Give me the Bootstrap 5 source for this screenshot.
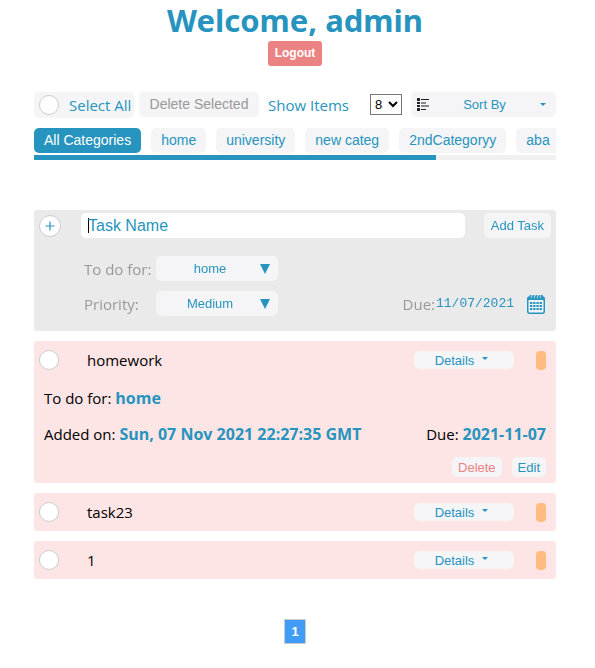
<!DOCTYPE html>
<html lang="en">
<head>
<meta charset="utf-8">
<meta name="viewport" content="width=device-width, initial-scale=1">
<title>Tasks</title>
<link href="https://cdn.jsdelivr.net/npm/bootstrap@5.3.0/dist/css/bootstrap.min.css" rel="stylesheet">
<style>
  :root { --brand: #2694be; --soft: #f5f4f6; --danger-soft: #eb8383; }
  body { font-family: "Open Sans", "Noto Sans", sans-serif; font-size: 15px; line-height: 20px; color: #000; }
  .page { padding: 0 39px 0 34px; }
  .brand { color: var(--brand); }
  h1 { font-family: "Noto Sans", sans-serif; font-size: 31px; line-height: 41px; font-weight: 700; color: var(--brand); }
  .ctl { font-family: "Liberation Sans", Arial, sans-serif; font-size: 13px; line-height: 15px; border: 0; border-radius: 5px; background: var(--soft); color: var(--brand); padding: 5px 7px; height: 25px; white-space: nowrap; }
  .ctl-lg { font-size: 14px; padding: 5px 10px; }
  .ctl:disabled { color: #999; }
  .logout { background: var(--danger-soft); color: #fff; font-size: 12px; font-weight: 700; border-radius: 3px; }
  .ring { appearance: none; width: 20px; height: 20px; margin: 0; border: 1px solid #ccc; border-radius: 50%; background: #fff; flex: none; }
  .ring:checked { background: var(--brand); }
  .toolbar { margin-top: 25px; height: 27px; }
  .select-all { background: var(--soft); border-radius: 5px; height: 26px; width: 100px; padding: 0 0 0 5px; gap: 10px; white-space: nowrap; }
  .del-sel { width: 120px; margin-left: 5px; }
  .items-label { margin-left: 9px; }
  .items { appearance: auto; width: 32px; height: 21px; border: 1px solid #767676; padding: 0; margin-right: 9px; background: #fff; color: #000; font: 13px "Liberation Sans", Arial, sans-serif; }
  .sort { width: 145px; padding-right: 10px; padding-left: 5px; }
  .tri { width: 0; height: 0; border: 3px solid transparent; border-top-color: currentColor; border-bottom: 0; }
  .tabs-row { margin-top: 10px; height: 27px; overflow: hidden; gap: 10px; }
  .tabs-row .active { background: var(--brand); color: #fff; }
  .track { height: 5px; background: #f1f1f1; }
  .track-bar { height: 5px; background: var(--brand); }
  .new-task { margin-top: 50px; background: #eaeaea; border-radius: 3px; padding: 3px 5px 15px; color: #999; }
  .plus { width: 22px; height: 22px; border: 1px solid #ccc; border-radius: 50%; background: #fff; color: var(--brand); padding: 0; }
  .plus svg, .pick svg { display: block; margin: auto; }
  .task-name { font: 16px/20px "Liberation Sans", Arial, sans-serif; height: 25px; border: 0; outline: 0; border-radius: 5px; color: var(--brand); padding: 0 7px; margin: 0 19px 0 20px; min-width: 0; background: #fff; }
  .task-name:focus:placeholder-shown { background: linear-gradient(#000, #000) 7px 5px / 1px 15px no-repeat #fff; caret-color: transparent; }
  .task-name::placeholder { color: var(--brand); opacity: 1; }
  .field { padding-left: 45px; height: 25px; margin-top: 18px; }
  .field + .field { margin-top: 10px; }
  .field label { width: 72px; }
  .choice { position: relative; width: 122px; }
  .choice select { appearance: none; width: 100%; padding: 5px 32px 5px 18px; text-align: center; text-align-last: center; }
  .choice svg { position: absolute; right: 8px; top: 8px; pointer-events: none; }
  .date { width: 80px; border: 0; padding: 0; margin: 0 11px 0 1px; background: none; color: var(--brand); font: 13px/20px "Liberation Mono", monospace; }
  .pick { border: 0; padding: 0; margin-right: 6px; background: none; width: 18px; color: var(--brand); }
  .task { margin-top: 10px; background: #fde5e5; border-radius: 3px; padding: 9px 10px 9px 5px; }
  .task.open { padding-bottom: 6px; }
  .task-head { height: 20px; }
  .task-title { margin-left: 28px; }
  .details { width: 100px; height: 18px; padding: 0 5px 0 0; gap: 8px; }
  .details .tri { margin-bottom: 4px; }
  .flag { width: 10px; height: 19px; border-radius: 4px; background: #ffbb80; margin-left: 22px; }
  .task-body { padding: 18px 0 0 5px; }
  .task-body b { color: var(--brand); font-size: 16px; }
  .acts { gap: 10px; margin-top: 13px; }
  .small-act { height: 20px; padding: 2px 6px; }
  .del { color: var(--danger-soft); }
  .pager { margin: 40px 0 24px; }
  .pager a { width: 22px; height: 25px; border: 1px solid #ccc; background: #409cf6; color: #fff; text-decoration: none; font: 700 13px/23px "Liberation Sans", Arial, sans-serif; text-align: center; }
</style>
<script src="https://cdn.jsdelivr.net/npm/bootstrap@5.3.0/dist/js/bootstrap.bundle.min.js" defer></script>
</head>
<body>
<main class="page">
  <header class="text-center">
    <h1 class="m-0">Welcome, admin</h1>
    <button type="button" class="ctl logout d-block mx-auto">Logout</button>
  </header>

  <div class="toolbar d-flex align-items-center">
    <label class="select-all brand d-flex align-items-center"><input type="checkbox" class="ring">Select All</label>
    <button type="button" class="ctl ctl-lg del-sel" disabled>Delete Selected</button>
    <label class="items-label brand" for="items">Show Items</label>
    <select id="items" class="items ms-auto"><option>8</option></select>
    <button type="button" class="ctl sort d-flex align-items-center justify-content-between">
      <svg width="13" height="13" viewBox="0 0 13 13"><path d="M1 0h3v3H1zM1 4h3v2H1zM1 7h3v2H1zM1 10h3v3H1z" fill="#222"/><path d="M5 1h8v1H5zM5 11h5v1H5z" fill="#222"/><path d="M5 4h5v2H5zM5 7h8v2H5z" fill="#888"/></svg>
      <span>Sort By</span><span class="tri"></span>
    </button>
  </div>

  <nav class="tabs-row d-flex" aria-label="Categories">
    <button type="button" class="ctl ctl-lg active">All Categories</button>
    <button type="button" class="ctl ctl-lg">home</button>
    <button type="button" class="ctl ctl-lg">university</button>
    <button type="button" class="ctl ctl-lg">new categ</button>
    <button type="button" class="ctl ctl-lg">2ndCategoryy</button>
    <button type="button" class="ctl ctl-lg">aba</button>
  </nav>
  <div class="track"><div class="track-bar" style="width:77%"></div></div>

  <form class="new-task">
    <div class="d-flex align-items-center">
      <button type="button" class="plus" aria-label="Expand"><svg width="10" height="10" viewBox="0 0 10 10" stroke="currentColor" stroke-width="1.200"><path d="M5 0.500v9M0.500 5h9"/></svg></button>
      <input class="task-name flex-fill" type="text" placeholder="Task Name" aria-label="Task Name" autofocus>
      <button type="button" class="ctl">Add Task</button>
    </div>
    <div class="field d-flex align-items-center">
      <label for="cat">To do for:</label>
      <div class="choice"><select id="cat" class="ctl"><option>home</option></select><svg width="10" height="10" viewBox="0 0 10 10" fill="#2694be"><path d="M0 0h10L5 10z"/></svg></div>
    </div>
    <div class="field d-flex align-items-center">
      <label for="prio">Priority:</label>
      <div class="choice"><select id="prio" class="ctl"><option>Medium</option></select><svg width="10" height="10" viewBox="0 0 10 10" fill="#2694be"><path d="M0 0h10L5 10z"/></svg></div>
      <label class="w-auto ms-auto" for="due">Due:</label>
      <input id="due" class="date" type="text" value="11/07/2021">
      <button type="button" class="pick" aria-label="Pick date"><svg width="18" height="20" viewBox="0 0 18 20"><rect x=".75" y="3" width="16.500" height="16.250" rx="2" fill="#eef4f6" stroke="currentColor" stroke-width="1.500"/><path d="M1 3h16v3H1z" fill="currentColor"/><path d="M3.500 4.500V1M6.500 4.500V1M9.500 4.500V1M12.500 4.500V1M15 4.500V1" stroke="currentColor" stroke-width="1.800"/><path d="M4.300 4.500V2M7.300 4.500V2M10.300 4.500V2M13.300 4.500V2" stroke="#d5e8ef" stroke-width=".7"/><path d="M3 9h12M3 12h12M3 15h12" stroke="currentColor" stroke-width="2" stroke-dasharray="2.300 .9"/></svg></button>
    </div>
  </form>

  <section class="task open">
    <div class="task-head d-flex align-items-center">
      <input type="checkbox" class="ring" aria-label="homework"><span class="task-title">homework</span>
      <button type="button" class="ctl details ms-auto d-flex align-items-center justify-content-center">Details <span class="tri"></span></button><span class="flag"></span>
    </div>
    <div class="task-body">
      <div>To do for: <b>home</b></div>
      <div class="d-flex justify-content-between mt-3"><span>Added on: <b>Sun, 07 Nov 2021 22:27:35 GMT</b></span><span>Due: <b>2021-11-07</b></span></div>
      <div class="acts d-flex justify-content-end">
        <button type="button" class="ctl small-act del">Delete</button><button type="button" class="ctl small-act">Edit</button>
      </div>
    </div>
  </section>
  <section class="task">
    <div class="task-head d-flex align-items-center">
      <input type="checkbox" class="ring" aria-label="task23"><span class="task-title">task23</span>
      <button type="button" class="ctl details ms-auto d-flex align-items-center justify-content-center">Details <span class="tri"></span></button><span class="flag"></span>
    </div>
  </section>
  <section class="task">
    <div class="task-head d-flex align-items-center">
      <input type="checkbox" class="ring" aria-label="1"><span class="task-title">1</span>
      <button type="button" class="ctl details ms-auto d-flex align-items-center justify-content-center">Details <span class="tri"></span></button><span class="flag"></span>
    </div>
  </section>

  <nav class="pager d-flex justify-content-center" aria-label="Pages"><a href="#">1</a></nav>
</main>
</body>
</html>
